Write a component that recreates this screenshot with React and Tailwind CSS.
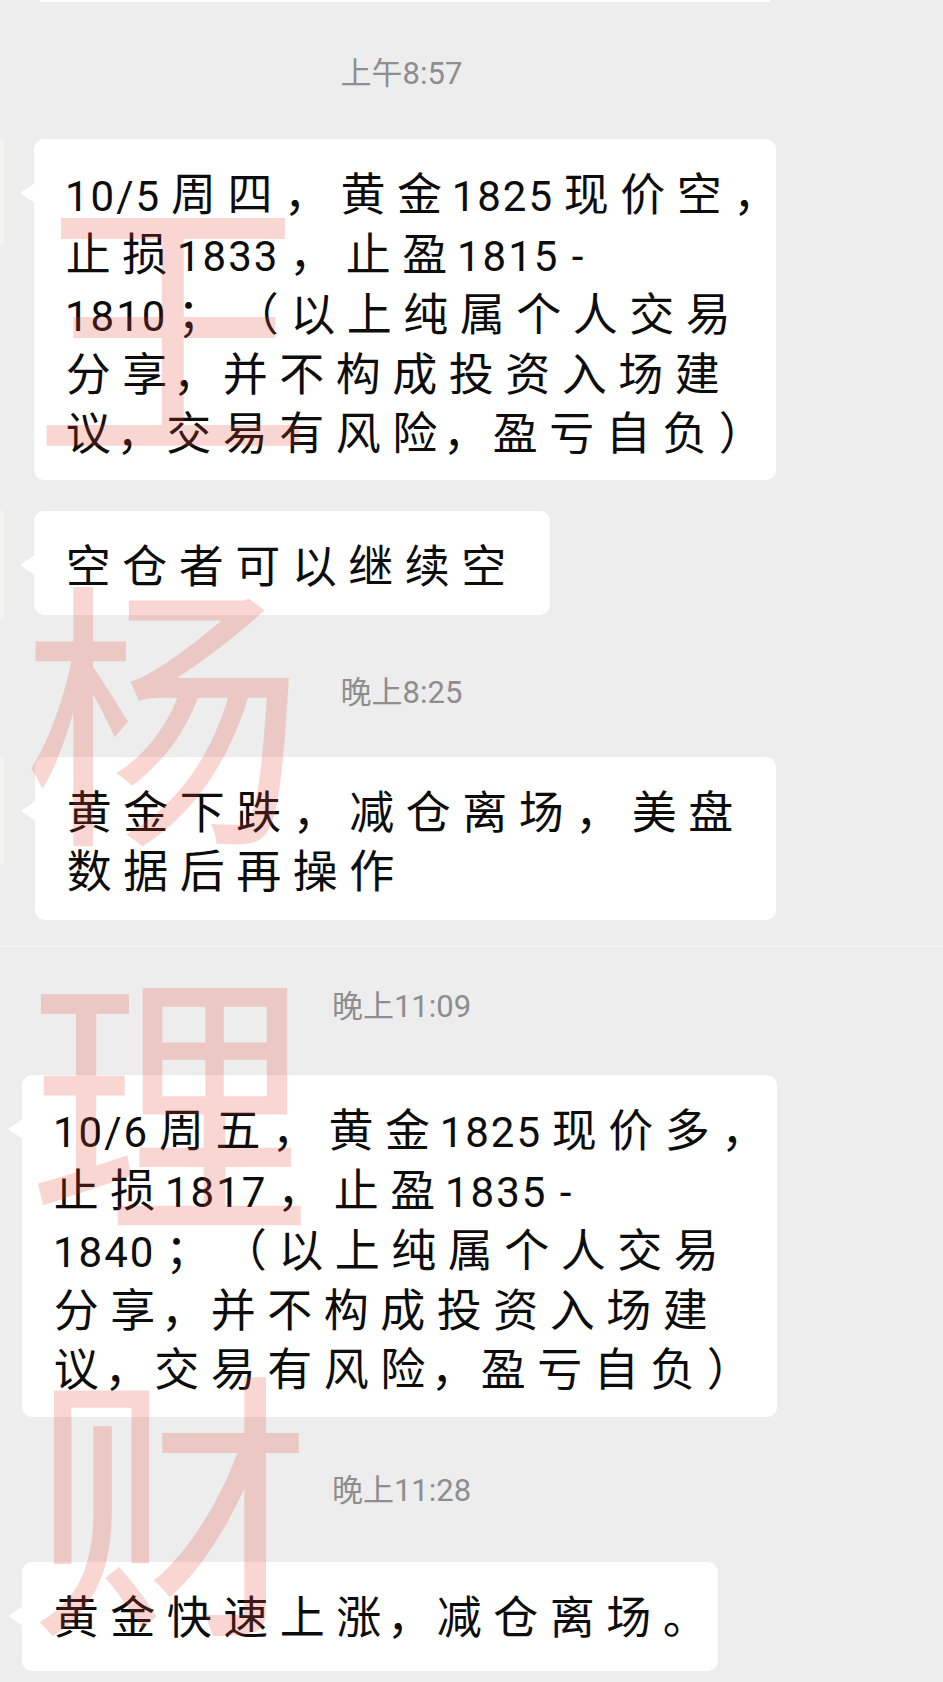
import React from "react";

const WIDE = /[\u3000-\u303f\u4e00-\u9fff\uff00-\uffef]/;

// each CJK glyph sits in its own wide cell, like the phone draws it.
// an ascii "," in the source stands for a tight full-width comma.
const Line = ({ text }) => {
  const parts = [];
  let run = "";
  const flush = (last) => {
    if (run) {
      const gap = parts.length === 0 ? "ml-[5px]" : "ml-[4px]";
      parts.push(
        <span key={parts.length} className={`text-[42px] tracking-[2px] ${gap} ${last ? "" : "mr-[4px]"}`}>
          {run}
        </span>
      );
      run = "";
    }
  };
  for (const ch of text) {
    if (ch === ",") {
      flush();
      parts.push(
        <span key={parts.length} className="inline-block w-[44px] text-center">
          ，
        </span>
      );
    } else if (WIDE.test(ch)) {
      flush();
      parts.push(
        <span key={parts.length} className="inline-block w-[56.5px] text-center">
          {ch}
        </span>
      );
    } else {
      run += ch;
    }
  }
  flush(true);
  return <div className="whitespace-nowrap">{parts}</div>;
};

const Bubble = ({ lines, className }) => (
  <div className={`relative rounded-[10px] bg-white pl-[26px] pt-[27px] ${className}`}>
    <svg className="absolute left-[-14px] top-[44px]" width="15" height="20" viewBox="0 0 15 20">
      <path d="M15 0 L2 8.4 Q0 10 2 11.6 L15 20 Z" fill="#ffffff" />
    </svg>
    {lines.map((l) => (
      <Line key={l} text={l} />
    ))}
  </div>
);

const Time = ({ children, className }) => (
  <div className={`w-[803px] text-center text-[31px] leading-[40px] text-[#8e8e8e] ${className}`}>
    {children}
  </div>
);

const Avatar = () => <div className="h-[107px] w-[4px] rounded-r-[3px] bg-[#f4f4f1]" />;

const App = () => {
  return (
    <div className="relative h-[1682px] w-[943px] overflow-hidden bg-[#ededed] font-['Roboto','Noto_Sans_CJK_SC',sans-serif] text-[45px] leading-[59px] text-[#0d0d0d]">
      <div className="flex h-[946px] flex-col">
        <div className="ml-[40px] h-[2px] w-[730px] bg-white" />
        <Time className="mt-[52px]">上午8:57</Time>

        <div className="mt-[45px] flex items-start">
          <Avatar />
          <Bubble
            className="ml-[30px] w-[742px] pb-[16px]"
            lines={[
              "10/5周四，黄金1825现价空，",
              "止损1833，止盈1815 -",
              "1810；（以上纯属个人交易",
              "分享,并不构成投资入场建",
              "议,交易有风险,盈亏自负）",
            ]}
          />
        </div>

        <div className="mt-[31px] flex items-start">
          <Avatar />
          <Bubble className="ml-[30px] w-[516px] pb-[18px]" lines={["空仓者可以继续空"]} />
        </div>

        <Time className="mt-[55px]">晚上8:25</Time>

        <div className="mt-[44px] flex items-start">
          <Avatar />
          <Bubble
            className="ml-[31px] w-[741px] pb-[18px]"
            lines={["黄金下跌，减仓离场，美盘", "数据后再操作"]}
          />
        </div>
      </div>

      <div className="h-px bg-[#f6f6f6]" />

      <div className="flex flex-col">
        <Time className="mt-[40px]">晚上11:09</Time>
        <Bubble
          className="ml-[22px] mt-[48px] w-[755px] pb-[17px]"
          lines={[
            "10/6周五，黄金1825现价多，",
            "止损1817，止盈1835 -",
            "1840；（以上纯属个人交易",
            "分享,并不构成投资入场建",
            "议,交易有风险,盈亏自负）",
          ]}
        />
        <Time className="mt-[54px]">晚上11:28</Time>
        <Bubble className="ml-[22px] mt-[51px] w-[696px] pb-[23px]" lines={["黄金快速上涨,减仓离场。"]} />
      </div>

      {/* watermark over the whole shot */}
      <div className="pointer-events-none absolute inset-0 font-['Noto_Sans_CJK_SC',sans-serif] text-[282px] leading-[282px] text-[rgba(228,70,50,0.22)]">
        <div className="absolute left-[32px] top-[172px]">王</div>
        <div className="absolute left-[22px] top-[560px]">杨</div>
        <div className="absolute left-[28px] top-[948px]">理</div>
        <div className="absolute left-[30px] top-[1350px]">财</div>
      </div>
    </div>
  );
};

export default App;
